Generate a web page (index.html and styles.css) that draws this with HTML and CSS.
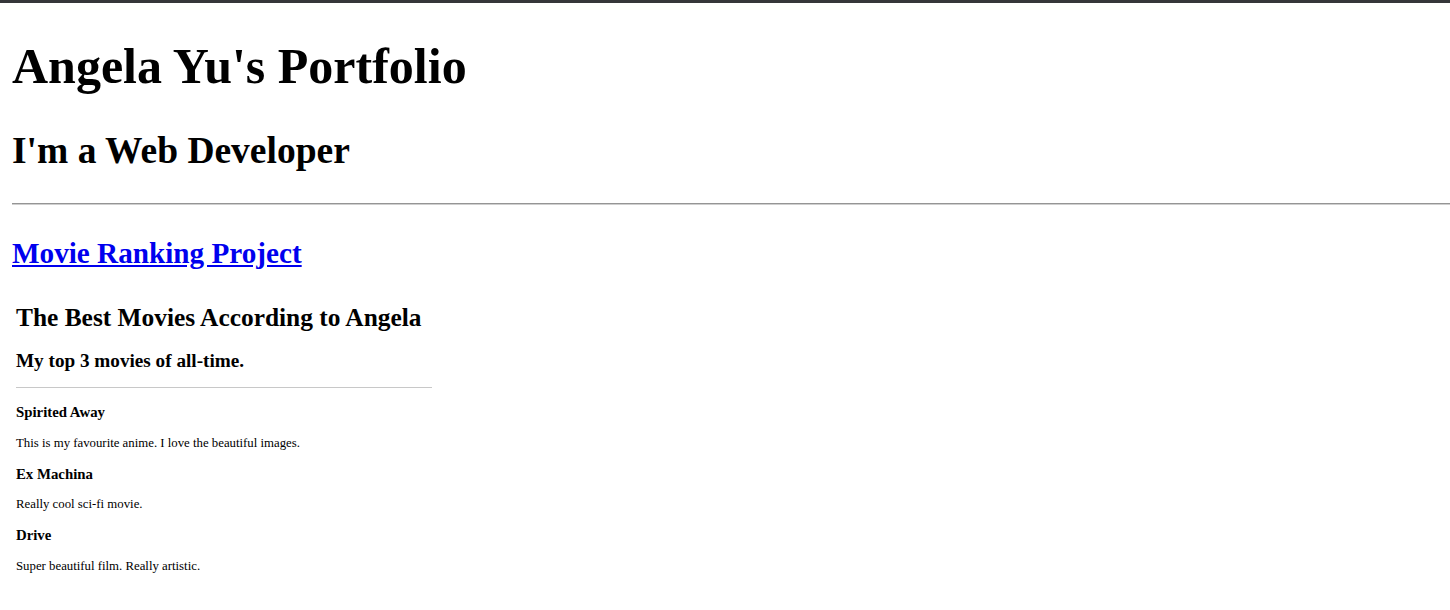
FILE: index.html
```html
<!DOCTYPE html>
<html lang="en">
<head>
<meta charset="utf-8">
<title>Angela Yu's Portfolio</title>
<link rel="stylesheet" href="styles.css">
</head>
<body>
<div class="topbar"></div>
<main class="page">
  <h1 class="title">Angela Yu's Portfolio</h1>
  <h2 class="subtitle">I'm a Web Developer</h2>
  <hr class="rule">
  <h3 class="project"><a href="#" class="project-link">Movie Ranking Project</a></h3>
  <section class="embed">
    <h1 class="embed-title">The Best Movies According to Angela</h1>
    <h2 class="embed-sub">My top 3 movies of all-time.</h2>
    <hr class="embed-rule">
    <h3 class="movie">Spirited Away</h3>
    <p class="desc">This is my favourite anime. I love the beautiful images.</p>
    <h3 class="movie">Ex Machina</h3>
    <p class="desc">Really cool sci-fi movie.</p>
    <h3 class="movie">Drive</h3>
    <p class="desc">Super beautiful film. Really artistic.</p>
  </section>
</main>
</body>
</html>
```
FILE: styles.css
```css
html, body {
  margin: 0;
  padding: 0;
  background: #ffffff;
}
body {
  font-family: "Liberation Serif", "Times New Roman", serif;
  color: #000;
  overflow: hidden;
}
.topbar {
  height: 3px;
  background: #35363a;
}
.page {
  padding: 0 0 0 12px;
  display: flex;
  flex-direction: column;
  align-items: flex-start;
}
.title {
  font-size: 50px;
  font-weight: bold;
  line-height: 57px;
  margin: 35px 0 0;
}
.subtitle {
  font-size: 37.5px;
  font-weight: bold;
  line-height: 43px;
  margin: 34px 0 0;
}
.rule {
  align-self: stretch;
  height: 0;
  margin: 31px 0 0;
  border: none;
  border-top: 1px solid #959595;
  border-bottom: 1px solid #cfcfcf;
}
.project {
  font-size: 29.2px;
  font-weight: bold;
  line-height: 34px;
  margin: 31px 0 0;
}
.project-link {
  color: #0000ee;
  text-decoration: underline;
}
.embed {
  margin: 33px 0 0 4px;
  width: 416px;
  display: flex;
  flex-direction: column;
  align-items: flex-start;
}
.embed-title {
  font-size: 25.4px;
  font-weight: bold;
  line-height: 29px;
  margin: 0;
}
.embed-sub {
  font-size: 19.2px;
  font-weight: bold;
  line-height: 22px;
  margin: 18px 0 0;
}
.embed-rule {
  align-self: stretch;
  height: 0;
  margin: 15px 0 0;
  border: none;
  border-top: 1px solid #c8c8c8;
}
.movie {
  font-size: 14.8px;
  font-weight: bold;
  line-height: 17px;
  margin: 15px 0 0;
}
.embed-rule + .movie {
  margin-top: 16px;
}
.desc {
  font-size: 12.8px;
  line-height: 15px;
  margin: 14.5px 0 0;
}
```
